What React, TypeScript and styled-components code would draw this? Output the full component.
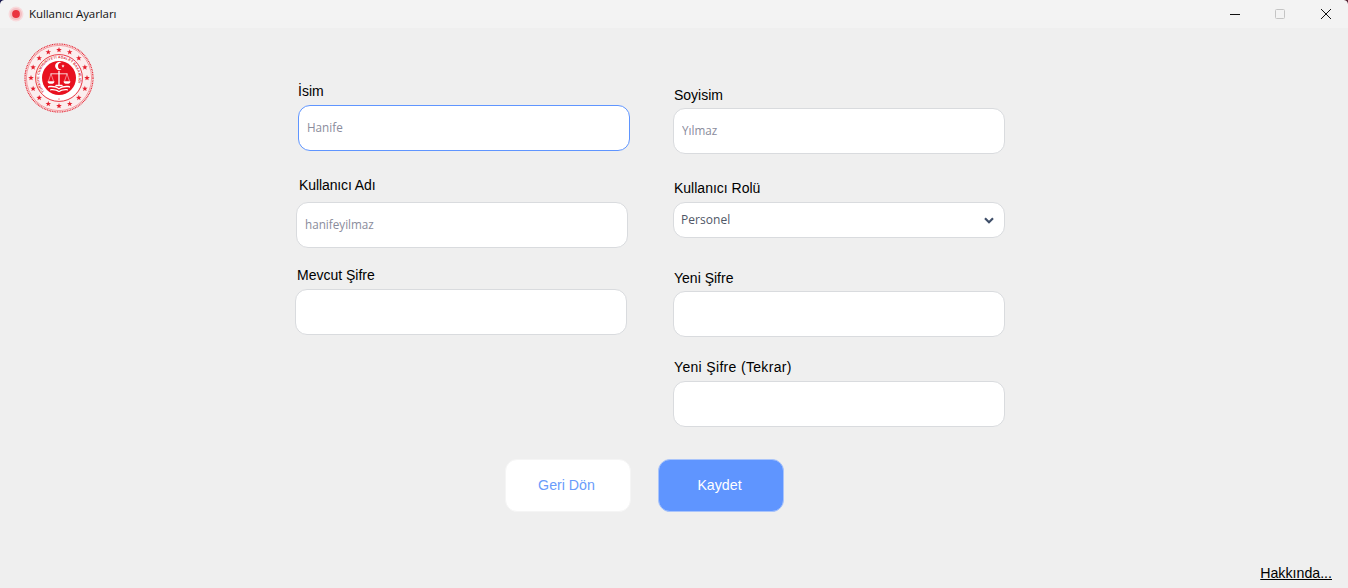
import React from "react";
import styled, { createGlobalStyle } from "styled-components";

const Global = createGlobalStyle`
  html, body { margin: 0; padding: 0; background: #efefef; }
  * { box-sizing: border-box; }
`;

const Page = styled.div`
  width: 1348px;
  height: 588px;
  display: flex;
  flex-direction: column;
  background: #efefef;
  font-family: "Liberation Sans", Arial, sans-serif;
  overflow: hidden;
`;

const TitleBar = styled.header`
  height: 28px;
  flex: none;
  display: flex;
  align-items: center;
  background: #f3f3f3;
  padding-left: 8px;
  position: relative;
`;

const Corner = styled.span<{ $side: "left" | "right"; $color: string }>`
  position: absolute;
  top: 0;
  ${(p) => p.$side}: 0;
  width: 4px;
  height: 4px;
  background: radial-gradient(
    circle at ${(p) => (p.$side === "left" ? "bottom right" : "bottom left")},
    transparent 3.4px,
    ${(p) => p.$color} 4.2px
  );
`;

const TitleText = styled.span`
  margin: 0 0 1px 5px;
  font: 11.5px "Open Sans", "Noto Sans", sans-serif;
  color: #111;
  letter-spacing: -0.07px;
`;

const WindowControls = styled.div`
  margin-left: auto;
  margin-right: -1px;
  display: flex;
`;

const WindowButton = styled.div`
  width: 46px;
  height: 28px;
  display: flex;
  align-items: center;
  justify-content: center;
`;

const Main = styled.main`
  flex: 1;
  display: flex;
  flex-direction: column;
  min-height: 0;
`;

const Content = styled.div`
  display: flex;
  align-items: flex-start;
`;

const EmblemBox = styled.div`
  margin: 15px 0 0 24px;
  width: 70px;
  height: 70px;
  flex: none;
`;

const Form = styled.div`
  display: flex;
  flex-direction: column;
  margin-left: 204px;
`;

const Columns = styled.div`
  display: flex;
`;

const Column = styled.div<{ $width: number }>`
  display: flex;
  flex-direction: column;
  width: ${(p) => p.$width}px;
`;

const Field = styled.div<{ $top: number; $left: number }>`
  display: flex;
  flex-direction: column;
  margin-top: ${(p) => p.$top}px;
  margin-left: ${(p) => p.$left}px;
  position: relative;
  width: 332px;
`;

const Label = styled.label<{ $gap: number; $indent?: number; $spacing?: number }>`
  display: block;
  height: 16px;
  line-height: 16px;
  font-size: 14px;
  color: #000;
  letter-spacing: ${(p) => p.$spacing ?? 0}px;
  margin-bottom: ${(p) => p.$gap}px;
  margin-left: ${(p) => p.$indent ?? 1}px;
`;

const TextInput = styled.input<{ $focused?: boolean }>`
  width: 332px;
  height: 46px;
  padding: 0 8px 2px;
  background: #fff;
  border: 1px solid ${(p) => (p.$focused ? "#5f95ff" : "#d9dbde")};
  border-radius: 12px;
  outline: none;
  font: 11.7px "Open Sans", "Noto Sans", sans-serif;
  color: #4b5563;
  &::placeholder { color: #8a8c9c; opacity: 1; }
`;

const RoleSelect = styled.select`
  appearance: none;
  width: 332px;
  height: 36px;
  padding: 0 7px 1px;
  background: #fff;
  border: 1px solid #d9dbde;
  border-radius: 12px;
  outline: none;
  font: 12px "Open Sans", "Noto Sans", sans-serif;
  letter-spacing: 0.05px;
  color: #4f5666;
`;

const SelectArrow = styled.svg`
  position: absolute;
  right: 11px;
  bottom: 14px;
  width: 10px;
  height: 7px;
  pointer-events: none;
`;

const Actions = styled.div`
  display: flex;
  gap: 27px;
  margin: 32px 0 0 207px;
`;

const ActionButton = styled.button<{ $primary?: boolean }>`
  width: 126px;
  height: 53px;
  padding: 0 3px 2px 0;
  border-radius: 12px;
  border: 1px solid ${(p) => (p.$primary ? "#a9c4fb" : "#f5f5f5")};
  background: ${(p) => (p.$primary ? "#5f95ff" : "#fff")};
  color: ${(p) => (p.$primary ? "#fff" : "#6a9cfb")};
  font: 14.2px "Liberation Sans", Arial, sans-serif;
`;

const Footer = styled.footer`
  margin-top: auto;
  display: flex;
  justify-content: flex-end;
  padding: 0 16px 6px 0;
`;

const AboutLink = styled.a`
  font-size: 14.2px;
  line-height: 17px;
  color: #000;
  text-decoration: underline;
`;

const Favicon = () => (
  <svg width="16" height="16" viewBox="0 0 16 16">
    <circle cx="8" cy="8" r="7.5" fill="#f8dadc" />
    <circle cx="8" cy="8" r="6" fill="#f4bfc3" />
    <circle cx="8" cy="8" r="3.9" fill="#ea3340" />
  </svg>
);

const star = (cx: number, cy: number, r: number) => {
  const pts: string[] = [];
  for (let i = 0; i < 10; i++) {
    const a = -Math.PI / 2 + (i * Math.PI) / 5;
    const rr = i % 2 ? r * 0.42 : r;
    pts.push(`${(cx + rr * Math.cos(a)).toFixed(2)},${(cy + rr * Math.sin(a)).toFixed(2)}`);
  }
  return pts.join(" ");
};

const RED = "#e5202e";

const Emblem = () => (
  <svg width="70" height="70" viewBox="0 0 70 70">
    <circle cx="35" cy="35" r="34" fill="#fbeeee" stroke={RED} strokeWidth="1.2" strokeDasharray="1 0.7" />
    <circle cx="35" cy="35" r="32.6" fill="none" stroke={RED} strokeWidth="0.4" />
    {Array.from({ length: 16 }).map((_, i) => {
      const a = (i * Math.PI * 2) / 16 - Math.PI / 2;
      return <polygon key={i} points={star(35 + 28 * Math.cos(a), 35 + 28 * Math.sin(a), 2.9)} fill={RED} />;
    })}
    <circle cx="35" cy="35" r="23.4" fill="#fff" stroke={RED} strokeWidth="0.9" />
    <path id="emblemRing" d="M 20.4 48.4 A 19.8 19.8 0 1 1 49.6 48.4" fill="none" />
    <text fontFamily="'Liberation Sans', sans-serif" fontSize="3.5" fontWeight="700" fill="#d8202c" letterSpacing="0.14">
      <textPath href="#emblemRing">TÜRKİYE CUMHURİYETİ ADALET BAKANLIĞI</textPath>
    </text>
    <polygon points={star(35, 56, 0.9)} fill={RED} />
    <circle cx="35" cy="35" r="17" fill="#e8101f" />
    <path d="M37.6 19.4a4.2 4.2 0 1 0 0 7.2a3.5 3.5 0 1 1 0-7.2z" fill="#fff" />
    <polygon points={star(39, 23, 1.7)} fill="#fff" />
    <g stroke="#fff" fill="none" strokeWidth="0.8">
      <path d="M35 28v14" strokeWidth="1.3" />
      <path d="M26.5 30.8h17" />
      <path d="M27 30.8l-2.5 7.4M27 30.8l2.5 7.4M43 30.8l-2.5 7.4M43 30.8l2.5 7.4" strokeWidth="0.5" />
    </g>
    <path d="M23.6 38.2h6.8a3.4 2.6 0 0 1-6.8 0zM39.6 38.2h6.8a3.4 2.6 0 0 1-6.8 0z" fill="#fff" />
    <path d="M31.8 41.8h6.4l.8 1.4h-8z" fill="#fff" />
    <path d="M24 43.2c3.8-1 8-.4 11 1.8c3-2.2 7.2-2.8 11-1.8v1.5c-3.8-1-8-.4-11 1.9c-3-2.3-7.2-2.9-11-1.9z" fill="#fff" />
    <path d="M26 46.4c3.2-.7 6.5-.1 9 1.7c2.5-1.8 5.8-2.4 9-1.7v1.1c-3.2-.6-6.5 0-9 1.8c-2.5-1.8-5.8-2.4-9-1.8z" fill="#fff" />
  </svg>
);

export default function App() {
  return (
    <Page>
      <Global />
      <TitleBar>
        <Corner $side="left" $color="#1c1c50" />
        <Corner $side="right" $color="#5a2a3a" />
        <Favicon />
        <TitleText>Kullanıcı Ayarları</TitleText>
        <WindowControls>
          <WindowButton>
            <svg width="12" height="12" viewBox="0 0 12 12"><path d="M2 6.5h10" stroke="#111" strokeWidth="1" /></svg>
          </WindowButton>
          <WindowButton>
            <svg width="12" height="12" viewBox="0 0 12 12"><rect x="1.5" y="1.5" width="9" height="9" rx="1" fill="none" stroke="#c4c4c4" strokeWidth="1" /></svg>
          </WindowButton>
          <WindowButton>
            <svg width="12" height="12" viewBox="0 0 12 12"><path d="M1 1l10 10M11 1L1 11" stroke="#111" strokeWidth="1" /></svg>
          </WindowButton>
        </WindowControls>
      </TitleBar>
      <Main>
        <Content>
          <EmblemBox><Emblem /></EmblemBox>
          <Form>
            <Columns>
              <Column $width={375}>
                <Field $top={55} $left={0}>
                  <Label $gap={6} $indent={0}>İsim</Label>
                  <TextInput $focused placeholder="Hanife" />
                </Field>
                <Field $top={26} $left={-2}>
                  <Label $gap={9} $indent={3} $spacing={-0.1}>Kullanıcı Adı</Label>
                  <TextInput placeholder="hanifeyilmaz" />
                </Field>
                <Field $top={19} $left={-3}>
                  <Label $gap={6} $indent={2}>Mevcut Şifre</Label>
                  <TextInput />
                </Field>
              </Column>
              <Column $width={332}>
                <Field $top={59} $left={0}>
                  <Label $gap={5}>Soyisim</Label>
                  <TextInput placeholder="Yılmaz" />
                </Field>
                <Field $top={26} $left={0}>
                  <Label $gap={6}>Kullanıcı Rolü</Label>
                  <RoleSelect defaultValue="Personel">
                    <option>Personel</option>
                  </RoleSelect>
                  <SelectArrow viewBox="0 0 10 7">
                    <path d="M1 1.2l4 4l4-4" fill="none" stroke="#3f4f69" strokeWidth="2.2" />
                  </SelectArrow>
                </Field>
                <Field $top={32} $left={0}>
                  <Label $gap={5}>Yeni Şifre</Label>
                  <TextInput />
                </Field>
                <Field $top={22} $left={0}>
                  <Label $gap={6} $spacing={0.33}>Yeni Şifre (Tekrar)</Label>
                  <TextInput />
                </Field>
              </Column>
            </Columns>
            <Actions>
              <ActionButton>Geri Dön</ActionButton>
              <ActionButton $primary>Kaydet</ActionButton>
            </Actions>
          </Form>
        </Content>
        <Footer>
          <AboutLink href="#">Hakkında...</AboutLink>
        </Footer>
      </Main>
    </Page>
  );
}
